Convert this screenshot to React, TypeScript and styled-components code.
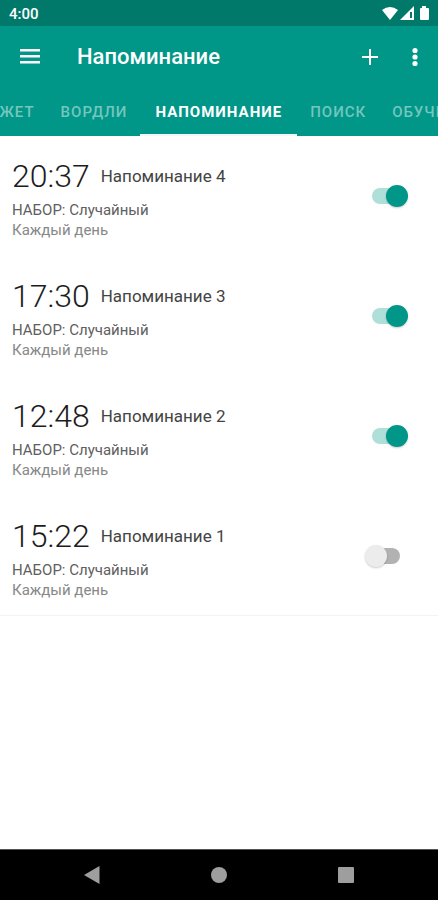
import { useLayoutEffect, useRef, useState } from "react";
import styled, { createGlobalStyle } from "styled-components";

const GlobalStyle = createGlobalStyle`
  * { box-sizing: border-box; }
  body {
    margin: 0;
    background: #fff;
    font-family: Roboto, "Noto Sans", sans-serif;
  }
  button { font: inherit; border: 0; background: none; padding: 0; cursor: pointer; }
`;

const Screen = styled.div`
  min-height: 100vh;
  display: flex;
  flex-direction: column;
`;

const StatusBar = styled.div`
  height: 26px;
  padding: 2px 8px 0 9px;
  display: flex;
  align-items: center;
  justify-content: space-between;
  background: #00796b;
  color: #fff;
  font-size: 15px;
  font-weight: 500;
`;

const StatusIcons = styled.svg`
  display: block;
  width: 49px;
  height: 16px;
`;

const Header = styled.header`
  background: #009688;
  color: #fff;
`;

const Toolbar = styled.div`
  height: 62px;
  padding: 0 3px 0 10px;
  display: flex;
  align-items: center;
`;

const IconButton = styled.button<{ $size: number }>`
  width: ${(p) => p.$size}px;
  height: 40px;
  display: grid;
  place-items: center;
  color: #fff;
`;

const Title = styled.h1`
  flex: 1;
  margin: 0 0 0 27px;
  font-size: 22px;
  line-height: 32px;
  font-weight: 500;
`;

const TabStrip = styled.nav`
  display: flex;
  height: 48px;
  overflow-x: auto;
  scrollbar-width: none;
`;

const Tab = styled.button<{ $active: boolean }>`
  && {
    flex: none;
    padding: 2px ${(p) => (p.$active ? 15 : 13)}px 0;
    border-bottom: 2px solid ${(p) => (p.$active ? "#f5f5f5" : "transparent")};
    color: ${(p) => (p.$active ? "#fff" : "#74c6be")};
    font-size: 15px;
    font-weight: ${(p) => (p.$active ? 700 : 500)};
    letter-spacing: 1px;
    white-space: nowrap;
  }
`;

const List = styled.ul`
  flex: 1;
  margin: 0;
  padding: 0;
  list-style: none;
`;

const Row = styled.li`
  height: 120px;
  padding: 0 30px 0 12px;
  display: flex;
  align-items: center;
  justify-content: space-between;

  &:last-child { border-bottom: 1px solid #f3f3f3; }
`;

const Details = styled.label`
  display: flex;
  flex-direction: column;
`;

const Heading = styled.span`
  display: flex;
  align-items: center;
  gap: 11px;
  height: 48px;
`;

const Time = styled.time`
  color: #1c1c1c;
  font-size: 32px;
  font-weight: 300;
`;

const Name = styled.span`
  color: #444;
  font-size: 17px;
`;

const Meta = styled.span<{ $color: string }>`
  color: ${(p) => p.$color};
  font-size: 15px;
  line-height: 20px;
`;

const Switch = styled.input`
  appearance: none;
  flex: none;
  position: relative;
  width: 44px;
  height: 24px;
  margin: 0;
  cursor: pointer;

  &::before {
    content: "";
    position: absolute;
    top: 4px;
    left: 8px;
    width: 28px;
    height: 16px;
    border-radius: 8px;
    background: #b2b2b2;
  }

  &::after {
    content: "";
    position: absolute;
    top: 1px;
    left: 1px;
    width: 22px;
    height: 22px;
    border-radius: 50%;
    background: #ececec;
    box-shadow: 0 1px 2px rgba(0, 0, 0, 0.2);
  }

  &:checked::before { background: #aedfd9; }
  &:checked::after { left: 22px; background: #009688; }
`;

const NavBar = styled.footer`
  height: 51px;
  padding: 0 66px;
  display: flex;
  align-items: center;
  justify-content: space-between;
  border-top: 1px solid #555;
  background: #000;
`;

const tabs = ["ВИДЖЕТ", "ВОРДЛИ", "НАПОМИНАНИЕ", "ПОИСК", "ОБУЧЕНИЕ"];

const initialReminders = [
  { id: 4, time: "20:37", enabled: true },
  { id: 3, time: "17:30", enabled: true },
  { id: 2, time: "12:48", enabled: true },
  { id: 1, time: "15:22", enabled: false },
];

function Tabs() {
  const [active, setActive] = useState(2);
  const strip = useRef<HTMLElement>(null);

  useLayoutEffect(() => {
    const el = strip.current;
    if (!el) return;
    const tab = el.children[active] as HTMLElement;
    el.scrollLeft = tab.offsetLeft - el.offsetLeft + tab.offsetWidth / 2 - el.clientWidth / 2;
  }, [active]);

  return (
    <TabStrip ref={strip}>
      {tabs.map((label, i) => (
        <Tab key={label} $active={i === active} onClick={() => setActive(i)}>
          {label}
        </Tab>
      ))}
    </TabStrip>
  );
}

export default function App() {
  const [reminders, setReminders] = useState(initialReminders);
  const toggle = (id: number) =>
    setReminders((all) => all.map((r) => (r.id === id ? { ...r, enabled: !r.enabled } : r)));

  return (
    <Screen>
      <GlobalStyle />
      <StatusBar>
        <span>4:00</span>
        <StatusIcons viewBox="0 0 49 16" fill="#fff" aria-hidden="true">
          <path d="M1 4 Q9 -2 17 4 L9 14 Z" />
          <path d="M33 0 V14 H19 Z" />
          <path d="M29 6 H31 V12 H29 Z" fill="#00796b" />
          <path d="M41 0 H45 V2 H47 Q48 2 48 3 V13 Q48 14 47 14 H40 Q39 14 39 13 V3 Q39 2 40 2 H41 Z" />
        </StatusIcons>
      </StatusBar>
      <Header>
        <Toolbar>
          <IconButton $size={40} aria-label="Меню">
            <svg width="22" height="16" viewBox="0 0 22 16" fill="#fff">
              <path d="M1 0h20v2.500H1zM1 6h20v2.500H1zM1 12h20v2.500H1z" />
            </svg>
          </IconButton>
          <Title>Напоминание</Title>
          <IconButton $size={48} aria-label="Добавить">
            <svg width="16" height="16" viewBox="0 0 16 16" fill="#fff">
              <path d="M7 0h2v7h7v2H9v7H7V9H0V7h7z" />
            </svg>
          </IconButton>
          <IconButton $size={41} aria-label="Ещё">
            <svg width="6" height="20" viewBox="0 0 6 20" fill="#fff">
              <circle cx="3" cy="3.5" r="2.6" />
              <circle cx="3" cy="10" r="2.6" />
              <circle cx="3" cy="16.5" r="2.6" />
            </svg>
          </IconButton>
        </Toolbar>
        <Tabs />
      </Header>
      <List>
        {reminders.map((r) => (
          <Row key={r.id}>
            <Details htmlFor={`reminder-${r.id}`}>
              <Heading>
                <Time>{r.time}</Time>
                <Name>Напоминание {r.id}</Name>
              </Heading>
              <Meta $color="#606060">НАБОР: Случайный</Meta>
              <Meta $color="#888">Каждый день</Meta>
            </Details>
            <Switch
              id={`reminder-${r.id}`}
              type="checkbox"
              role="switch"
              checked={r.enabled}
              onChange={() => toggle(r.id)}
            />
          </Row>
        ))}
      </List>
      <NavBar>
        <IconButton $size={52} aria-label="Назад">
          <svg width="16" height="18" viewBox="0 0 16 18" fill="#9e9e9e">
            <path d="M0 9 15.5 0V18z" />
          </svg>
        </IconButton>
        <IconButton $size={52} aria-label="Домой">
          <svg width="16" height="16" viewBox="0 0 16 16" fill="#9e9e9e">
            <circle cx="8" cy="8" r="8" />
          </svg>
        </IconButton>
        <IconButton $size={52} aria-label="Недавние">
          <svg width="18" height="18" viewBox="0 0 18 18" fill="#9e9e9e">
            <rect x="1" y="1" width="16" height="16" rx="1" />
          </svg>
        </IconButton>
      </NavBar>
    </Screen>
  );
}
